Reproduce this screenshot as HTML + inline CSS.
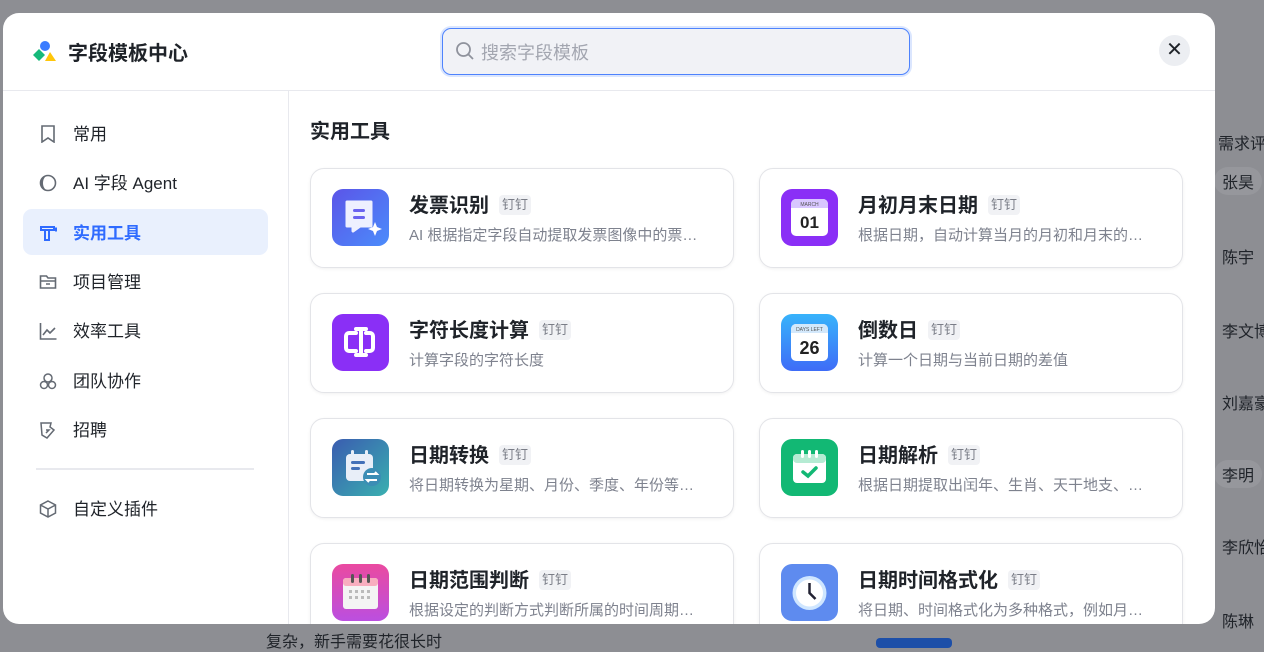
<!DOCTYPE html>
<html><head><meta charset="utf-8"><style>
*{box-sizing:border-box;margin:0;padding:0}
body{width:1264px;height:644px;overflow:hidden;background:#8d8e93;font-family:"Liberation Sans","Noto Sans CJK SC",sans-serif;position:relative}
.bg{position:absolute;color:#1f2329;font-size:16px;white-space:nowrap}
.modal{position:absolute;left:3px;top:13px;width:1212px;height:611px;background:#fff;border-radius:16px;overflow:hidden}
.hdr{height:78px;border-bottom:1.5px solid #e8e9ee;position:relative}
.logo{position:absolute;left:30px;top:27px}
.title{position:absolute;left:65px;top:24px;font-size:20px;font-weight:bold;color:#1f2329}
.search{position:absolute;left:439px;top:15px;width:468px;height:47px;border:1.5px solid #4e83fd;border-radius:9px;background:#f1f2f6;box-shadow:0 0 0 2px #dbe6fe}
.search span{position:absolute;left:38px;top:10px;font-size:18px;color:#a3a6b0}
.close{position:absolute;left:1156px;top:22px;width:31px;height:31px;border-radius:50%;background:#eceef2;text-align:center;line-height:31px;font-size:20px;color:#1f2329}
.side{position:absolute;left:0;top:78px;width:286px;bottom:0;border-right:1.5px solid #e8e9ee}
.it{position:absolute;left:20px;width:245px;height:46px;border-radius:9px;font-size:17px;color:#1f2329;line-height:50px;padding-left:50px}
.it svg{position:absolute;left:16px;top:15px}
.it.act{background:#e9f0fd;color:#2f6bff;font-weight:bold}
.main{position:absolute;left:287px;top:78px;right:0;bottom:0}
.h2{position:absolute;left:20px;top:24px;font-size:20px;font-weight:bold;color:#1f2329}
.card{position:absolute;width:424px;height:100px;border:1px solid #e3e4e8;border-radius:14px;box-shadow:0 1px 3px rgba(0,0,0,.06);background:#fff}
.ic{position:absolute;left:21px;top:20px;width:57px;height:57px;border-radius:11px;overflow:hidden}
.ct{position:absolute;left:98px;top:20px;font-size:20px;font-weight:bold;color:#1f2329;white-space:nowrap}
.tag{display:inline-block;vertical-align:3px;margin-left:10px;font-size:13px;font-weight:normal;color:#7a7d87;background:#f1f2f5;border-radius:4px;padding:1px 3px;line-height:18px}
.cd{position:absolute;left:98px;top:55px;font-size:15px;color:#7e828e;white-space:nowrap}
</style></head><body>
<div class="bg" style="left:1218px;top:130px">需求评</div>
<div class="bg" style="left:1214px;top:167px;background:#96979c;border-radius:14px;padding:2px 8px">张昊</div>
<div class="bg" style="left:1222px;top:244px">陈宇</div>
<div class="bg" style="left:1222px;top:318px">李文博</div>
<div class="bg" style="left:1222px;top:390px">刘嘉豪</div>
<div class="bg" style="left:1214px;top:460px;background:#96979c;border-radius:14px;padding:2px 8px">李明</div>
<div class="bg" style="left:1222px;top:534px">李欣怡</div>
<div class="bg" style="left:1222px;top:608px">陈琳</div>
<div class="bg" style="left:266px;top:628px">复杂，新手需要花很长时</div>
<div style="position:absolute;left:876px;top:638px;width:76px;height:10px;background:#1d4fa8;border-radius:4px"></div>
<div class="modal">
 <div class="hdr">
  <svg class="logo" width="24" height="22" viewBox="0 0 24 22"><circle cx="12" cy="6" r="5" fill="#3b7cff"/><path d="M0 15 6 9 12 15 6 21Z" fill="#16b97a"/><path d="M12 21 17 12 23 21Z" fill="#ffc60a"/></svg>
  <div class="title">字段模板中心</div>
  <div class="search"><svg style="position:absolute;left:12px;top:12px" width="20" height="20" viewBox="0 0 20 20" fill="none" stroke="#8f929c" stroke-width="1.8"><circle cx="8.5" cy="8.5" r="6.5"/><path d="M13.5 13.5 18 18"/></svg><span>搜索字段模板</span></div>
  <div class="close">✕</div>
 </div>
 <div class="side">
  <div class="it" style="top:19px"><svg width="18" height="18" viewBox="0 0 18 18" fill="none" stroke="#646a73" stroke-width="1.6"><path d="M3 1h12v16l-6-4-6 4z"/></svg>常用</div>
  <div class="it" style="top:68px;font-weight:normal"><svg width="18" height="18" viewBox="0 0 18 18"><circle cx="9" cy="9" r="7.5" fill="none" stroke="#646a73" stroke-width="1.6"/><path d="M9 1.5A7.5 7.5 0 0 0 9 16.5 5 7.5 0 0 1 9 1.5z" fill="#646a73"/></svg>AI 字段 Agent</div>
  <div class="it act" style="top:118px"><svg width="18" height="18" viewBox="0 0 18 18" fill="none" stroke="#2f6bff" stroke-width="2"><path d="M2 3h13v3H2zM6 6v10h4V6M15 4.5h2v3"/></svg>实用工具</div>
  <div class="it" style="top:167px"><svg width="18" height="18" viewBox="0 0 18 18" fill="none" stroke="#646a73" stroke-width="1.6"><path d="M1.5 3h6l1.5 2h7.5v10h-15zM1.5 8h15M7 11h4"/></svg>项目管理</div>
  <div class="it" style="top:216px"><svg width="18" height="18" viewBox="0 0 18 18" fill="none" stroke="#646a73" stroke-width="1.6"><path d="M1.5 1v16h16M4 13l4-5 3 3 5-5"/></svg>效率工具</div>
  <div class="it" style="top:266px"><svg width="18" height="18" viewBox="0 0 18 18" fill="none" stroke="#646a73" stroke-width="1.5"><circle cx="9" cy="6" r="4"/><circle cx="5" cy="13" r="3.5"/><circle cx="13" cy="13" r="3.5"/></svg>团队协作</div>
  <div class="it" style="top:315px"><svg width="18" height="18" viewBox="0 0 18 18" fill="none" stroke="#646a73" stroke-width="1.5"><path d="M2 2h10l-1 4 4 3-7 8-5-3zM7 9h3l-3 3"/></svg>招聘</div>
  <div style="position:absolute;left:33px;top:377px;width:218px;height:2px;background:#e8e9ee"></div>
  <div class="it" style="top:394px"><svg width="18" height="18" viewBox="0 0 18 18" fill="none" stroke="#646a73" stroke-width="1.5"><path d="M9 1 16.5 5v8L9 17 1.5 13V5zM1.5 5 9 9l7.5-4M9 9v8"/></svg>自定义插件</div>
 </div>
 <div class="main">
  <div class="h2">实用工具</div>
  <div class="card" style="left:20px;top:77px"><div class="ic" style="background:linear-gradient(135deg,#5b55e8,#4b8cfb)"><svg width="57" height="57"><path d="M15 13h24v24H28l-7 5v-5h-6z" fill="#eef0ff" stroke="#eef0ff" stroke-linejoin="round" stroke-width="3"/><rect x="21" y="20" width="12" height="3" rx="1.5" fill="#6a63f0"/><rect x="21" y="27" width="12" height="3" rx="1.5" fill="#6a63f0"/><path d="M43 33l2 5 5 2-5 2-2 5-2-5-5-2 5-2z" fill="#fff"/></svg></div><div class="ct">发票识别<span class="tag">钉钉</span></div><div class="cd">AI 根据指定字段自动提取发票图像中的票…</div></div>
  <div class="card" style="left:469px;top:77px"><div class="ic" style="background:#8a2ff6"><svg width="57" height="57"><rect x="10" y="10" width="37" height="37" rx="5" fill="#fff"/><path d="M15 10h27a5 5 0 0 1 5 5v4H10v-4a5 5 0 0 1 5-5z" fill="#d8c7ff"/><text x="28.5" y="17" font-size="5" text-anchor="middle" fill="#555" font-family="Liberation Sans">MARCH</text><text x="28.5" y="39" font-size="17" font-weight="bold" text-anchor="middle" fill="#222" font-family="Liberation Sans">01</text></svg></div><div class="ct">月初月末日期<span class="tag">钉钉</span></div><div class="cd">根据日期，自动计算当月的月初和月末的…</div></div>
  <div class="card" style="left:20px;top:202px"><div class="ic" style="background:#8a2ff6"><svg width="57" height="57" fill="none" stroke="#fff" stroke-width="4"><path d="M24 19h-7a3 3 0 0 0-3 3v12a3 3 0 0 0 3 3h7M34 19h4a3 3 0 0 1 3 3v12a3 3 0 0 1-3 3h-4M29 15v26M24 15h10M24 41h10" stroke-linecap="round"/></svg></div><div class="ct">字符长度计算<span class="tag">钉钉</span></div><div class="cd">计算字段的字符长度</div></div>
  <div class="card" style="left:469px;top:202px"><div class="ic" style="background:linear-gradient(180deg,#38b3fb,#3e6cf7)"><svg width="57" height="57"><rect x="10" y="10" width="37" height="37" rx="5" fill="#fff"/><path d="M15 10h27a5 5 0 0 1 5 5v4H10v-4a5 5 0 0 1 5-5z" fill="#d3e8fb"/><text x="28.5" y="17" font-size="5" text-anchor="middle" fill="#555" font-family="Liberation Sans">DAYS LEFT</text><text x="28.5" y="40" font-size="18" font-weight="bold" text-anchor="middle" fill="#222" font-family="Liberation Sans">26</text></svg></div><div class="ct">倒数日<span class="tag">钉钉</span></div><div class="cd">计算一个日期与当前日期的差值</div></div>
  <div class="card" style="left:20px;top:327px"><div class="ic" style="background:linear-gradient(135deg,#3a5cb0,#3ab0b0)"><svg width="57" height="57"><rect x="14" y="15" width="27" height="27" rx="4" fill="#e8eef8"/><rect x="19" y="11" width="3" height="7" rx="1.5" fill="#e8eef8"/><rect x="33" y="11" width="3" height="7" rx="1.5" fill="#e8eef8"/><rect x="19" y="22" width="14" height="3" rx="1.5" fill="#4270b8"/><rect x="19" y="28" width="9" height="3" rx="1.5" fill="#4270b8"/><circle cx="40" cy="38" r="9" fill="#3b8db5"/><path d="M35 35h10l-2-2M45 41H35l2 2" stroke="#fff" stroke-width="2" fill="none"/></svg></div><div class="ct">日期转换<span class="tag">钉钉</span></div><div class="cd">将日期转换为星期、月份、季度、年份等…</div></div>
  <div class="card" style="left:469px;top:327px"><div class="ic" style="background:#12b874"><svg width="57" height="57"><rect x="12" y="15" width="33" height="29" rx="4" fill="#fff"/><rect x="12" y="15" width="33" height="9" rx="4" fill="#b5ebd3"/><rect x="20" y="11" width="3" height="8" rx="1.5" fill="#fff"/><rect x="27" y="11" width="3" height="8" rx="1.5" fill="#fff"/><rect x="34" y="11" width="3" height="8" rx="1.5" fill="#fff"/><path d="M22 33l5 4 8-8" stroke="#12b874" stroke-width="3.5" fill="none" stroke-linecap="round"/></svg></div><div class="ct">日期解析<span class="tag">钉钉</span></div><div class="cd">根据日期提取出闰年、生肖、天干地支、…</div></div>
  <div class="card" style="left:20px;top:452px"><div class="ic" style="background:linear-gradient(180deg,#ea4aa0,#bb4fe0)"><svg width="57" height="57"><rect x="11" y="14" width="35" height="31" rx="3" fill="#f4f4f4"/><rect x="11" y="14" width="35" height="8" rx="3" fill="#f8aebf"/><rect x="19" y="10" width="3" height="9" rx="1.5" fill="#555"/><rect x="27" y="10" width="3" height="9" rx="1.5" fill="#555"/><rect x="35" y="10" width="3" height="9" rx="1.5" fill="#555"/><g fill="#bbb"><rect x="17" y="26" width="3" height="3"/><rect x="23" y="26" width="3" height="3"/><rect x="29" y="26" width="3" height="3"/><rect x="35" y="26" width="3" height="3"/><rect x="17" y="32" width="3" height="3"/><rect x="23" y="32" width="3" height="3"/><rect x="29" y="32" width="3" height="3"/><rect x="35" y="32" width="3" height="3"/></g></svg></div><div class="ct">日期范围判断<span class="tag">钉钉</span></div><div class="cd">根据设定的判断方式判断所属的时间周期…</div></div>
  <div class="card" style="left:469px;top:452px"><div class="ic" style="background:#5e8bef"><svg width="57" height="57"><circle cx="28.5" cy="29" r="17" fill="#cfe6ff"/><circle cx="28.5" cy="29" r="13.5" fill="#fff"/><path d="M28.5 19v10l6 6" stroke="#223" stroke-width="2.5" fill="none"/></svg></div><div class="ct">日期时间格式化<span class="tag">钉钉</span></div><div class="cd">将日期、时间格式化为多种格式，例如月…</div></div>
 </div>
</div>
</body></html>
